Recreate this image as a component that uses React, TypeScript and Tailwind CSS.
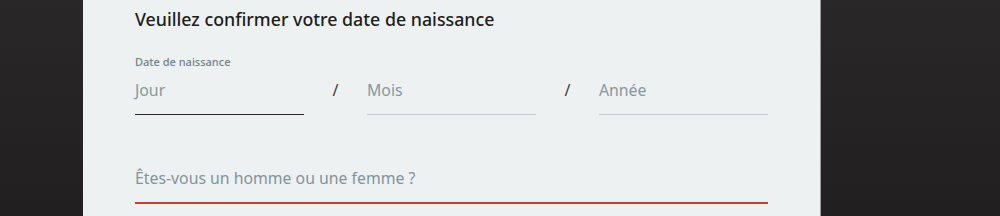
export default function App() {
  const font = { fontFamily: '"Segoe UI", "Noto Sans", sans-serif' };
  return (
    <div className="h-[216px] w-[1000px] overflow-hidden bg-gradient-to-b from-[#292728] to-[#211f20] flex" style={font}>
      <div className="ml-[83px] w-[738px] h-full bg-[#edf1f2] border-r border-[#9a9a9a] px-[52px] pt-[7px]">
        <h1 className="text-[17.8px] font-medium text-[#1c1c1c] leading-[24px]">
          Veuillez confirmer votre date de naissance
        </h1>
        <div className="mt-[24px] text-[11px] font-medium text-[#70828b] leading-[14px]">
          Date de naissance
        </div>
        <div className="flex items-end mt-[6px]">
          <div className="w-[169px] h-[40px] border-b border-[#2a2a2a] text-[15.8px] text-[#8698a0] leading-[30px]">
            Jour
          </div>
          <div className="w-[63px] h-[40px] text-center text-[16px] text-[#3a3a3a] leading-[30px]">/</div>
          <div className="w-[169px] h-[40px] border-b border-[#c3cbcf] text-[15.8px] text-[#8698a0] leading-[30px]">
            Mois
          </div>
          <div className="w-[63px] h-[40px] text-center text-[16px] text-[#3a3a3a] leading-[30px]">/</div>
          <div className="w-[169px] h-[40px] border-b border-[#c3cbcf] text-[15.8px] text-[#8698a0] leading-[30px]">
            Année
          </div>
        </div>
        <div className="mt-[48px] h-[41px] border-b-2 border-[#d8382a] text-[15.8px] text-[#82949c] leading-[30px]">
          Êtes-vous un homme ou une femme ?
        </div>
      </div>
    </div>
  );
}
